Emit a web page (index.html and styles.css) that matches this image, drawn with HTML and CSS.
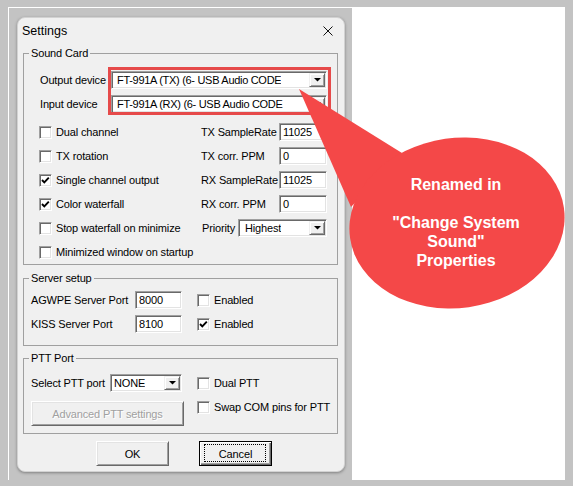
FILE: index.html
```html
<!DOCTYPE html>
<html>
<head>
<meta charset="utf-8">
<title>Settings</title>
<link rel="stylesheet" href="styles.css">
</head>
<body>
<div class="frame">
  <div class="shot">
    <div class="dialog">
      <div class="titlebar">
        <span class="title">Settings</span>
        <svg class="close" width="10" height="10" viewBox="0 0 10 10"><path d="M0.5 0.5 L9.5 9.5 M9.5 0.5 L0.5 9.5" stroke="#111" stroke-width="1" fill="none"/></svg>
      </div>

      <fieldset class="group sound">
        <legend>Sound Card</legend>
        <div class="sound-body">
          <div class="device-row">
            <span class="dlbl">Output device</span>
            <div class="combo device"><span class="ctext">FT-991A (TX) (6- USB Audio CODE</span><span class="drop"><svg width="7" height="4" viewBox="0 0 7 4"><polygon points="0,0 7,0 3.5,3.5" fill="#000"/></svg></span></div>
          </div>
          <div class="device-row">
            <span class="dlbl">Input device</span>
            <div class="combo device"><span class="ctext">FT-991A (RX) (6- USB Audio CODE</span><span class="drop"><svg width="7" height="4" viewBox="0 0 7 4"><polygon points="0,0 7,0 3.5,3.5" fill="#000"/></svg></span></div>
          </div>
          <div class="options">
            <div class="col-left">
              <div class="row check"><span class="box"></span>Dual channel</div>
              <div class="row check"><span class="box"></span>TX rotation</div>
              <div class="row check"><span class="box"><svg width="11" height="11" viewBox="0 0 11 11"><polyline points="2,5 4.3,7.4 8.8,2.6" fill="none" stroke="#000" stroke-width="1.9"/></svg></span>Single channel output</div>
              <div class="row check"><span class="box"><svg width="11" height="11" viewBox="0 0 11 11"><polyline points="2,5 4.3,7.4 8.8,2.6" fill="none" stroke="#000" stroke-width="1.9"/></svg></span>Color waterfall</div>
              <div class="row check"><span class="box"></span>Stop waterfall on minimize</div>
              <div class="row check"><span class="box"></span>Minimized window on startup</div>
            </div>
            <div class="col-right">
              <div class="row field"><span>TX SampleRate</span><span class="tb">11025</span></div>
              <div class="row field"><span>TX corr. PPM</span><span class="tb">0</span></div>
              <div class="row field"><span>RX SampleRate</span><span class="tb">11025</span></div>
              <div class="row field"><span>RX corr. PPM</span><span class="tb">0</span></div>
              <div class="row field"><span class="prio">Priority</span><div class="combo priority"><span class="ctext">Highest</span><span class="drop"><svg width="7" height="4" viewBox="0 0 7 4"><polygon points="0,0 7,0 3.5,3.5" fill="#000"/></svg></span></div></div>
            </div>
          </div>
        </div>
      </fieldset>

      <fieldset class="group server">
        <legend>Server setup</legend>
        <div class="server-body">
          <div class="srv-row">
            <span class="slbl">AGWPE Server Port</span>
            <span class="tb port">8000</span>
            <span class="check srv-check"><span class="box"></span>Enabled</span>
          </div>
          <div class="srv-row">
            <span class="slbl">KISS Server Port</span>
            <span class="tb port">8100</span>
            <span class="check srv-check"><span class="box"><svg width="11" height="11" viewBox="0 0 11 11"><polyline points="2,5 4.3,7.4 8.8,2.6" fill="none" stroke="#000" stroke-width="1.9"/></svg></span>Enabled</span>
          </div>
        </div>
      </fieldset>

      <fieldset class="group ptt">
        <legend>PTT Port</legend>
        <div class="ptt-body">
          <div class="ptt-left">
            <div class="ptt-row">
              <span class="plbl">Select PTT port</span>
              <div class="combo port-combo"><span class="ctext">NONE</span><span class="drop"><svg width="7" height="4" viewBox="0 0 7 4"><polygon points="0,0 7,0 3.5,3.5" fill="#000"/></svg></span></div>
            </div>
            <div class="btn disabled adv">Advanced PTT settings</div>
          </div>
          <div class="ptt-right">
            <div class="row check"><span class="box"></span>Dual PTT</div>
            <div class="row check"><span class="box"></span>Swap COM pins for PTT</div>
          </div>
        </div>
      </fieldset>

      <div class="buttons">
        <div class="btn">OK</div>
        <div class="btn default">Cancel</div>
      </div>
    </div>
  </div>
</div>

<div class="annotation">
  <svg width="573" height="486" viewBox="0 0 573 486">
    <rect x="109.5" y="68.5" width="220" height="45" fill="none" stroke="#e64a4a" stroke-width="3"/>
    <polygon points="299,89 402,153 351,207" fill="#f44848"/>
    <ellipse cx="457" cy="223" rx="108" ry="85" transform="rotate(-8 457 223)" fill="#f44848"/>
  </svg>
  <div class="callout-text">Renamed in<br><br>"Change System<br>Sound"<br>Properties</div>
</div>
</body>
</html>
```

FILE: styles.css
```css
* { box-sizing: border-box; }

html, body { margin: 0; }

body {
  width: 573px;
  height: 486px;
  padding: 7px 0 0 8px;
  position: relative;
  overflow: hidden;
  background: #c3c3c3;
  font-family: "Liberation Sans", Arial, sans-serif;
  font-size: 11px;
  color: #000;
}

.frame {
  width: 557px;
  height: 473px;
  background: #fff;
  padding: 1px 0 0 1px;
  display: flex;
}

.shot {
  width: 343px;
  background: #c3c3c3;
  padding: 9px 0 0 8px;
}

.dialog {
  width: 328px;
  height: 455px;
  background: #f0f0f0;
  border: 1px solid #d2d2d2;
  border-radius: 8px;
  box-shadow: 0 1px 3px rgba(0, 0, 0, 0.35);
  letter-spacing: -0.15px;
  white-space: nowrap;
}

.titlebar {
  height: 25px;
  display: flex;
  align-items: center;
  justify-content: space-between;
  padding: 0 11px 0 4px;
}

.title {
  font-size: 12.5px;
  letter-spacing: 0;
}

.close { display: block; }

/* group boxes */
.group {
  margin: 4px 0 0 5px;
  width: 315px;
  padding: 0;
  border: 1px solid #a0a0a0;
  min-width: 0;
}

.group legend {
  margin-left: 5px;
  padding: 0 2px;
  line-height: 13px;
  font-size: 11px;
}

.server { margin-top: 7px; }
.ptt { margin-top: 6px; }

/* sound card */
.sound-body {
  padding: 8px 0 0 15px;
}

.device-row {
  height: 24px;
  display: flex;
  align-items: center;
}

.dlbl {
  width: 72px;
  padding-left: 1px;
}

.options {
  display: flex;
  margin-top: 4px;
}

.col-left { width: 162px; }
.col-right { width: 126px; }

.row {
  height: 24px;
  display: flex;
  align-items: center;
}

.field { justify-content: space-between; }

.prio { padding-left: 1px; }

/* checkbox */
.check {
  display: flex;
  align-items: center;
}

.box {
  width: 13px;
  height: 13px;
  margin-right: 4px;
  flex: none;
  background: #fff;
  border: 1px solid;
  border-color: #a0a0a0 #fff #fff #a0a0a0;
  box-shadow: inset 1px 1px 0 #696969, inset -1px -1px 0 #e3e3e3;
}

.box svg { display: block; }

/* text boxes */
.tb {
  width: 48px;
  height: 18px;
  flex: none;
  background: #fff;
  border: 1px solid;
  border-color: #a0a0a0 #fff #fff #a0a0a0;
  box-shadow: inset 1px 1px 0 #696969, inset -1px -1px 0 #e3e3e3;
  padding-left: 3px;
  display: flex;
  align-items: center;
}

.tb.port { width: 47px; }

/* combo boxes */
.combo {
  height: 18px;
  flex: none;
  background: #fff;
  border: 1px solid;
  border-color: #a0a0a0 #fff #fff #a0a0a0;
  box-shadow: inset 1px 1px 0 #696969, inset -1px -1px 0 #e3e3e3;
  padding: 1px;
  display: flex;
  align-items: center;
}

.ctext {
  padding-left: 3px;
  overflow: hidden;
}

.combo.device { width: 216px; }
.combo.device .ctext { padding-left: 4px; letter-spacing: -0.3px; }
.combo.priority { width: 89px; }
.combo.priority .ctext { padding-left: 5px; }
.combo.port-combo { width: 72px; }
.combo.port-combo .ctext { padding-left: 2px; }

.drop {
  margin-left: auto;
  width: 16px;
  height: 14px;
  flex: none;
  background: #f0f0f0;
  border: 1px solid;
  border-color: #f0f0f0 #696969 #696969 #f0f0f0;
  box-shadow: inset 1px 1px 0 #fff, inset -1px -1px 0 #a0a0a0;
  display: flex;
  align-items: center;
  justify-content: center;
}

.drop svg { display: block; }

/* server setup */
.server-body {
  padding: 3px 0 9px 7px;
}

.srv-row {
  height: 24px;
  display: flex;
  align-items: center;
}

.slbl { width: 104px; }

.srv-check { margin-left: 15px; }

/* ptt */
.ptt-body {
  display: flex;
  padding: 6px 0 7px 7px;
}

.ptt-left { width: 153px; }

.ptt-row {
  height: 24px;
  display: flex;
  align-items: center;
}

.plbl { width: 79px; }

.ptt-right { margin-left: 13px; }

/* buttons */
.btn {
  position: relative;
  width: 73px;
  height: 25px;
  background: #f0f0f0;
  border: 1px solid;
  border-color: #fff #696969 #696969 #fff;
  box-shadow: inset 1px 1px 0 #e3e3e3, inset -1px -1px 0 #a0a0a0;
  display: flex;
  align-items: center;
  justify-content: center;
}

.btn.adv {
  width: 153px;
  margin-top: 6px;
}

.btn.disabled {
  color: #a0a0a0;
  text-shadow: 1px 1px 0 #fff;
}

.btn.default {
  border-color: #000;
  box-shadow: inset 1px 1px 0 #fff, inset -1px -1px 0 #696969, inset -2px -2px 0 #a0a0a0;
}

.btn.default::after {
  content: "";
  position: absolute;
  top: 2px;
  left: 4px;
  right: 5px;
  bottom: 3px;
  border: 1px dotted #000;
}

.buttons {
  display: flex;
  gap: 30px;
  padding-left: 78px;
  margin-top: 7px;
}

/* annotation overlay */
.annotation {
  position: absolute;
  left: 0;
  top: 0;
  width: 573px;
  height: 486px;
  pointer-events: none;
}

.annotation svg {
  position: absolute;
  left: 0;
  top: 0;
  display: block;
}

.callout-text {
  position: absolute;
  left: 348px;
  top: 175px;
  width: 216px;
  text-align: center;
  color: #fff;
  font-family: "Liberation Sans", Arial, sans-serif;
  font-weight: bold;
  font-size: 16px;
  line-height: 19px;
}
```
